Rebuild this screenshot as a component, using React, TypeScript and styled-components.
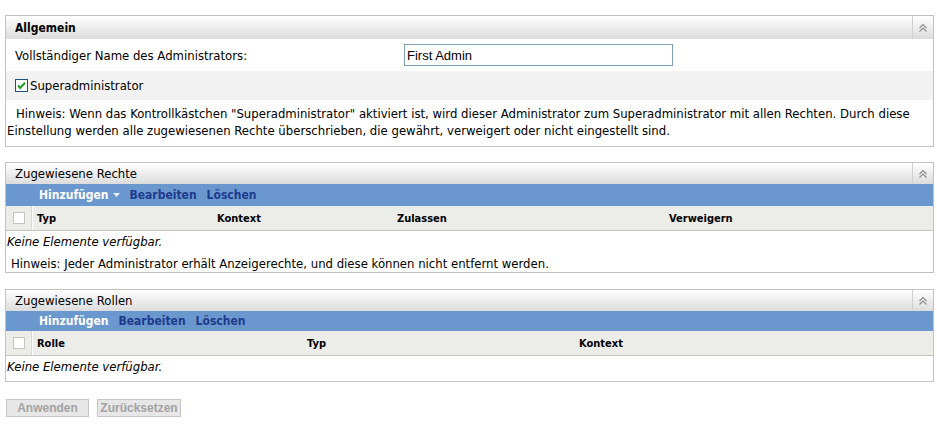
import React from 'react'
import styled, { createGlobalStyle } from 'styled-components'

const GlobalStyle = createGlobalStyle`
    body {
        margin: 0;
        background: #ffffff;
        font-family: "DejaVu Sans Condensed", "DejaVu Sans", sans-serif;
        font-size: 13px;
        color: #000;
    }
`

const Page = styled.div`
    padding: 15px 3px 0 5px;
    display: flex;
    flex-direction: column;
`

const Panel = styled.section<{ $gap: number }>`
    border: 1px solid #c3c3c3;
    background: #fff;
    margin-bottom: ${p => p.$gap}px;
`

const PanelHeader = styled.div<{ $height: number; $bold?: boolean }>`
    height: ${p => p.$height}px;
    display: flex;
    align-items: center;
    background: linear-gradient(#ffffff, #dcdcdc);
    font-weight: ${p => (p.$bold ? 'bold' : 'normal')};
    font-size: ${p => (p.$bold ? 12 : 13)}px;
`

const HeaderTitle = styled.div`
    flex: 1;
    padding-left: 9px;
`

const Collapse = styled.div`
    width: 20px;
    align-self: stretch;
    border-left: 1px solid #d0d0d0;
    display: flex;
    align-items: center;
    justify-content: center;
`

const FieldRow = styled.div<{ $shade?: boolean; $height: number }>`
    display: grid;
    grid-template-columns: 389px 1fr;
    align-items: center;
    height: ${p => p.$height}px;
    padding-left: 9px;
    background: ${p => (p.$shade ? '#f2f2f2' : '#fff')};
`

const TextInput = styled.input`
    width: 269px;
    height: 22px;
    box-sizing: border-box;
    border: 1px solid #7f9db9;
    padding: 0 2px;
    font-family: "Liberation Sans", Arial, sans-serif;
    font-size: 13px;
    color: #000;
    outline: none;
`

const CheckLabel = styled.label`
    display: flex;
    align-items: center;
    gap: 2px;
`

const Note = styled.p<{ $indent?: number }>`
    margin: 0;
    padding: 5px 4px 7px 1px;
    line-height: 17px;
    text-indent: ${p => p.$indent ?? 0}px;
`

const Toolbar = styled.div<{ $height: number }>`
    height: ${p => p.$height}px;
    background: #6b97cf;
    display: flex;
    align-items: center;
    gap: 10px;
    padding-left: 33px;
    font-weight: bold;
    font-size: 12px;
`

const ToolButton = styled.span<{ $active?: boolean }>`
    color: ${p => (p.$active ? '#ffffff' : '#1d3c8c')};
    display: flex;
    align-items: center;
    gap: 4px;
    cursor: pointer;
`

const ColumnHead = styled.div<{ $cols: string }>`
    display: grid;
    grid-template-columns: 26px ${p => p.$cols};
    height: 24px;
    background: #ecece9;
    border-bottom: 1px solid #c3c3c3;
    font-weight: bold;
    font-size: 11px;
`

const HeadCell = styled.div`
    display: flex;
    align-items: center;
    padding-left: 5px;
`

const CheckCell = styled.div`
    display: flex;
    align-items: center;
    justify-content: center;
    border-right: 1px solid #d8d8d4;
    box-shadow: 1px 0 0 #fff;
    padding-left: 1px;
`

const EmptyBox = styled.span`
    width: 12px;
    height: 12px;
    box-sizing: border-box;
    background: #fff;
    border: 1px solid #c5c5bd;
`

const EmptyText = styled.div<{ $height: number }>`
    font-style: italic;
    padding-left: 1px;
    height: ${p => p.$height}px;
    line-height: 22px;
`

const TableNote = styled.div`
    padding: 3px 0 0 5px;
    height: 16px;
    line-height: 16px;
`

const Actions = styled.div`
    display: flex;
    gap: 8px;
    padding-left: 1px;
`

const ActionButton = styled.button<{ $width: number }>`
    width: ${p => p.$width}px;
    height: 18px;
    padding: 0;
    background: #e7e7e7;
    border: 1px solid #c6c6c6;
    color: #a3a3a3;
    font-family: "Liberation Sans", Arial, sans-serif;
    font-weight: bold;
    font-size: 12px;
`

const CollapseIcon = () => (
    <svg width="10" height="10" viewBox="0 0 10 10">
        <path d="M1.5 5 L5 1.5 L8.5 5" fill="none" stroke="#8a8a8a" strokeWidth="1.1" />
        <path d="M1.5 8.5 L5 5 L8.5 8.5" fill="none" stroke="#8a8a8a" strokeWidth="1.1" />
    </svg>
)

const CheckedBox = () => (
    <svg width="13" height="13" viewBox="0 0 13 13">
        <rect x="0.5" y="0.5" width="12" height="12" fill="#fff" stroke="#1c5180" />
        <path d="M3 6.5 L5.2 9 L10 3.8" fill="none" stroke="#21a121" strokeWidth="2" />
    </svg>
)

const Caret = () => (
    <svg width="7" height="4" viewBox="0 0 7 4">
        <path d="M0 0 L7 0 L3.5 4 Z" fill="#e8eef8" />
    </svg>
)

interface SectionProps {
    title: string;
    bold?: boolean;
    height: number;
    gap: number;
    children: React.ReactNode;
}

const Section = ({ title, bold, height, gap, children }: SectionProps) => (
    <Panel $gap={gap}>
        <PanelHeader $height={height} $bold={bold}>
            <HeaderTitle>{title}</HeaderTitle>
            <Collapse><CollapseIcon /></Collapse>
        </PanelHeader>
        {children}
    </Panel>
)

const App = () => {
    return (
        <>
            <GlobalStyle />
            <Page>
                <Section title="Allgemein" bold height={23} gap={15}>
                    <FieldRow $height={32}>
                        <span>Vollständiger Name des Administrators:</span>
                        <TextInput defaultValue="First Admin" />
                    </FieldRow>
                    <FieldRow $height={29} $shade>
                        <CheckLabel><CheckedBox />Superadministrator</CheckLabel>
                    </FieldRow>
                    <Note $indent={9}>
                        Hinweis: Wenn das Kontrollkästchen "Superadministrator" aktiviert ist, wird dieser Administrator zum Superadministrator mit allen Rechten. Durch diese Einstellung werden alle zugewiesenen Rechte überschrieben, die gewährt, verweigert oder nicht eingestellt sind.
                    </Note>
                </Section>

                <Section title="Zugewiesene Rechte" height={21} gap={16}>
                    <Toolbar $height={22}>
                        <ToolButton $active>Hinzufügen <Caret /></ToolButton>
                        <ToolButton>Bearbeiten</ToolButton>
                        <ToolButton>Löschen</ToolButton>
                    </Toolbar>
                    <ColumnHead $cols="180px 180px 272px 1fr">
                        <CheckCell><EmptyBox /></CheckCell>
                        <HeadCell>Typ</HeadCell>
                        <HeadCell>Kontext</HeadCell>
                        <HeadCell>Zulassen</HeadCell>
                        <HeadCell>Verweigern</HeadCell>
                    </ColumnHead>
                    <EmptyText $height={22}>Keine Elemente verfügbar.</EmptyText>
                    <TableNote>Hinweis: Jeder Administrator erhält Anzeigerechte, und diese können nicht entfernt werden.</TableNote>
                </Section>

                <Section title="Zugewiesene Rollen" height={21} gap={17}>
                    <Toolbar $height={20}>
                        <ToolButton $active>Hinzufügen</ToolButton>
                        <ToolButton>Bearbeiten</ToolButton>
                        <ToolButton>Löschen</ToolButton>
                    </Toolbar>
                    <ColumnHead $cols="270px 272px 1fr">
                        <CheckCell><EmptyBox /></CheckCell>
                        <HeadCell>Rolle</HeadCell>
                        <HeadCell>Typ</HeadCell>
                        <HeadCell>Kontext</HeadCell>
                    </ColumnHead>
                    <EmptyText $height={25}>Keine Elemente verfügbar.</EmptyText>
                </Section>

                <Actions>
                    <ActionButton $width={83}>Anwenden</ActionButton>
                    <ActionButton $width={84}>Zurücksetzen</ActionButton>
                </Actions>
            </Page>
        </>
    )
}

export default App
